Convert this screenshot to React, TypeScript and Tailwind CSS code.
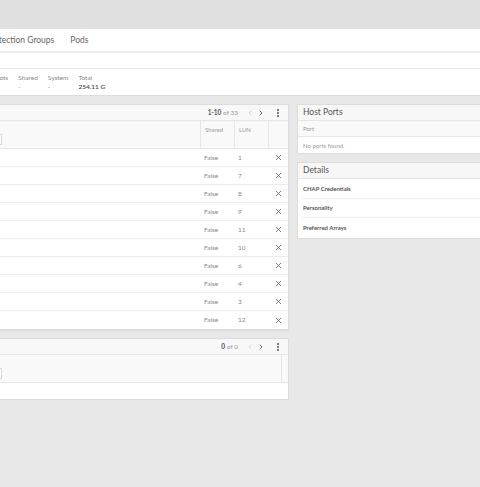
import { ChevronLeft, ChevronRight, EllipsisVertical, X } from "lucide-react"

const rows = ["1", "7", "8", "9", "11", "10", "6", "4", "3", "12"]

function Pager({ label }: { label: React.ReactNode }) {
  return (
    <div className="flex h-[16px] items-center justify-end border-b border-[#e6e6e6] bg-[#f8f8f8] pr-[5px]">
      <span className="text-[6.5px] text-[#999]">{label}</span>
      <ChevronLeft className="ml-[8px] h-[8px] w-[8px] text-[#c4c4c4]" strokeWidth={2} />
      <ChevronRight className="ml-[3px] h-[8px] w-[8px] text-[#555]" strokeWidth={2.5} />
      <EllipsisVertical className="ml-[8px] h-[10px] w-[10px] text-[#555]" strokeWidth={3} />
    </div>
  )
}

export default function App() {
  return (
    <div
      className="flex h-[487px] w-[480px] flex-col overflow-hidden bg-[#e8e8e8] text-[#555]"
      style={{ fontFamily: "Lato, 'Open Sans', sans-serif" }}
    >
      <div className="h-[29px] shrink-0 bg-[#e0e0e0]" />

      {/* tabs */}
      <div className="flex h-[22px] shrink-0 items-center gap-[16px] bg-white">
        <span className="-ml-[14px] text-[8.5px] text-[#666]">Protection Groups</span>
        <span className="text-[8.5px] text-[#666]">Pods</span>
      </div>
      <div className="h-[2px] shrink-0 bg-[#ececec]" />
      <div className="h-[16px] shrink-0 border-b border-[#e6e6e6] bg-white" />

      {/* space stats */}
      <div className="flex h-[26px] shrink-0 gap-[10px] bg-white pt-[4px]">
        {[
          ["Snapshots", "", "-ml-[21px]"],
          ["Shared", "-", ""],
          ["System", "-", ""],
          ["Total", "254.11 G", ""],
        ].map(([k, v, c]) => (
          <div key={k} className={`flex flex-col ${c}`}>
            <span className="text-[6.5px] leading-[9px] text-[#888]">{k}</span>
            <span className={`text-[6.5px] leading-[9px] ${k === "Total" ? "font-semibold text-[#444]" : "text-[#888]"}`}>{v}</span>
          </div>
        ))}
      </div>
      <div className="h-[1px] shrink-0 bg-[#dcdcdc]" />

      <div className="mt-[8px] flex gap-[8px]">
        {/* left column */}
        <div className="flex w-[289px] shrink-0 flex-col gap-[8px]">
          <div className="border border-l-0 border-[#dcdcdc] bg-white shadow-[0_1px_1px_rgba(0,0,0,0.04)]">
            <Pager
              label={
                <>
                  <span className="font-bold text-[#555]">1-10</span> of 33
                </>
              }
            />
            <div className="flex h-[28px] border-b border-[#e6e6e6] bg-[#f9f9f9]">
              <div className="flex flex-1 items-end pb-[3px]">
                <div className="h-[11px] w-[2px] border border-l-0 border-[#d8d8d8] bg-white" />
              </div>
              <div className="w-[34px] border-l border-[#e6e6e6] pl-[4px] pt-[4px] text-[6px] text-[#999]">Shared</div>
              <div className="w-[34px] border-l border-[#e6e6e6] pl-[4px] pt-[4px] text-[6px] text-[#999]">LUN</div>
              <div className="w-[20px] border-l border-[#e6e6e6]" />
            </div>
            {rows.map((lun, i) => (
              <div
                key={i}
                className={`flex h-[18px] items-center ${i < rows.length - 1 ? "border-b border-[#ececec]" : ""}`}
              >
                <div className="flex-1" />
                <div className="w-[34px] pl-[4px] text-[6.5px] text-[#888]">False</div>
                <div className="w-[34px] pl-[4px] text-[6.5px] text-[#888]">{lun}</div>
                <div className="flex w-[20px] justify-center">
                  <X className="h-[9px] w-[9px] text-[#555]" strokeWidth={2} />
                </div>
              </div>
            ))}
          </div>

          <div className="border border-l-0 border-[#dcdcdc] bg-white">
            <Pager
              label={
                <>
                  <span className="font-bold text-[#555]">0</span> of 0
                </>
              }
            />
            <div className="flex h-[28px] border-b border-[#e6e6e6] bg-[#f9f9f9]">
              <div className="flex flex-1 items-end pb-[3px]">
                <div className="h-[11px] w-[2px] border border-l-0 border-[#d8d8d8] bg-white" />
              </div>
              <div className="w-[7px] border-l border-[#e6e6e6]" />
            </div>
            <div className="h-[16px]" />
          </div>
        </div>

        {/* right column */}
        <div className="flex w-[200px] shrink-0 flex-col gap-[8px]">
          <div className="border border-r-0 border-[#dcdcdc] bg-white">
            <div className="flex h-[16px] items-center border-b border-[#e6e6e6] bg-[#f7f7f7] pl-[5px] text-[8.5px] text-[#555]">
              Host Ports
            </div>
            <div className="flex h-[16px] items-center border-b border-[#e6e6e6] bg-[#f9f9f9] pl-[5px] text-[6px] text-[#999]">
              Port
            </div>
            <div className="flex h-[16px] items-center pl-[5px] text-[6px] text-[#999]">No ports found.</div>
          </div>

          <div className="border border-r-0 border-[#dcdcdc] bg-white">
            <div className="flex h-[16px] items-center border-b border-[#e6e6e6] bg-[#f7f7f7] pl-[5px] text-[8.5px] text-[#555]">
              Details
            </div>
            <div className="px-[5px]">
              {["CHAP Credentials", "Personality", "Preferred Arrays"].map((t, i) => (
                <div
                  key={t}
                  className={`flex h-[19.5px] items-center text-[6px] font-semibold text-[#444] ${i < 2 ? "border-b border-[#ececec]" : ""}`}
                >
                  {t}
                </div>
              ))}
            </div>
          </div>
        </div>
      </div>
    </div>
  )
}
